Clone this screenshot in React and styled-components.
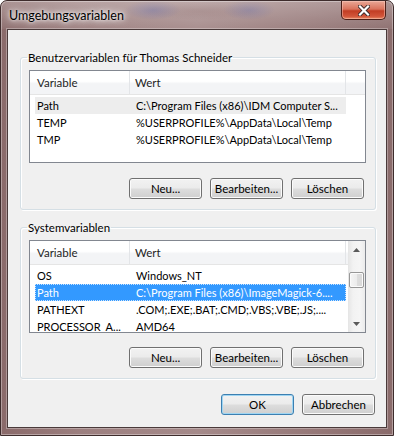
import React from 'react';
import styled, { createGlobalStyle } from 'styled-components';

const GlobalStyle = createGlobalStyle`
  html, body {
    margin: 0;
    padding: 0;
    background: #fff;
  }
  body {
    font-family: "Segoe UI", Lato, "Noto Sans", sans-serif;
    font-size: 11px;
    color: #000;
  }
`;

const Frame = styled.div`
  width: 394px;
  height: 436px;
  box-sizing: border-box;
  display: flex;
  flex-direction: column;
  padding: 0 6px 7px 6px;
  border: 1px solid #3e2c2c;
  border-radius: 7px 7px 0 0;
  background:
    radial-gradient(ellipse 28px 10px at 152px 9px, rgba(80, 84, 150, 0.45), transparent),
    radial-gradient(ellipse 26px 10px at 248px 9px, rgba(80, 84, 150, 0.4), transparent),
    radial-gradient(ellipse 60px 9px at 200px 10px, rgba(110, 70, 70, 0.25), transparent),
    linear-gradient(to right, #8a6a6a 0%, #9c7f7f 20%, #a58a8a 50%, #967878 80%, #8a6b6b 100%);
  box-shadow: inset 0 0 0 1px rgba(255, 255, 255, 0.35);
`;

const TitleBar = styled.div`
  height: 28px;
  display: flex;
  align-items: flex-start;
  justify-content: space-between;
  background: linear-gradient(to bottom, rgba(255, 255, 255, 0.28), rgba(255, 255, 255, 0.05));
  margin: 0 -6px;
  padding: 0 6px;
  border-radius: 6px 6px 0 0;
`;

const Title = styled.div`
  padding: 7px 0 0 2px;
  font-size: 12.5px;
  line-height: 16px;
  color: #000;
  text-shadow: 0 0 6px #fff, 0 0 10px rgba(255, 255, 255, 0.9), 0 0 3px rgba(255, 255, 255, 0.8);
`;

const CloseButton = styled.div`
  width: 45px;
  height: 19px;
  margin-right: 1px;
  box-sizing: border-box;
  border: 1px solid #4c1f18;
  border-top: none;
  border-radius: 0 0 5px 5px;
  background: linear-gradient(to bottom, #e9a796 0%, #d9735c 45%, #c23d24 55%, #d2553a 85%, #e88a64 100%);
  box-shadow: inset 0 0 0 1px rgba(255, 210, 200, 0.45);
  display: flex;
  align-items: center;
  justify-content: center;
`;

const Client = styled.div`
  flex: 1;
  background: #f0f0f0;
  border: 1px solid #4a3a3a;
  box-shadow: 0 0 0 1px rgba(255, 255, 255, 0.3);
  padding: 20px 10px 0 12px;
  display: flex;
  flex-direction: column;
`;

const Group = styled.fieldset`
  margin: ${(p) => (p.$second ? '10px 0 0 0' : '0')};
  border: 1px solid #d5dfe5;
  border-radius: 3px;
  padding: 5px 9px 10px 8px;
  box-shadow: inset 1px 1px 0 #fff, 1px 1px 0 #fff;
  min-width: 0;
`;

const Legend = styled.legend`
  padding: 0 1px;
  margin-left: -2px;
  line-height: 15px;
  font-size: 11.5px;
`;

const ListBox = styled.div`
  height: 93px;
  box-sizing: border-box;
  border: 1px solid #828790;
  background: #fff;
  display: flex;
  overflow: hidden;
`;

const ListMain = styled.div`
  flex: 1;
  min-width: 0;
  display: flex;
  flex-direction: column;
`;

const Header = styled.div`
  height: 24px;
  box-sizing: border-box;
  display: flex;
  border-bottom: 1px solid #e5e5e5;
  background: linear-gradient(to bottom, #fff 0%, #fff 45%, #f3f4f6 55%, #f3f4f6 100%);
`;

const HeaderCell = styled.div`
  width: ${(p) => p.$w}px;
  flex: ${(p) => (p.$w ? 'none' : '1')};
  box-sizing: border-box;
  padding-left: ${(p) => p.$pad}px;
  border-right: ${(p) => (p.$w ? '1px solid #e3e5e8' : 'none')};
  line-height: 23px;
  font-size: 11.5px;
  color: #1e1e1e;
`;

const Rows = styled.div`
  padding-top: 2px;
`;

const Row = styled.div`
  display: grid;
  grid-template-columns: 95px 216px;
  width: 311px;
  height: 17px;
  box-sizing: border-box;
  margin-left: 5px;
  line-height: 15px;
  white-space: nowrap;
  background: ${(p) => (p.$state === 'selected' ? '#3399ff' : p.$state === 'inactive' ? '#ededed' : 'transparent')};
  color: ${(p) => (p.$state === 'selected' ? '#fff' : '#000')};
  border: 1px ${(p) => (p.$state === 'selected' ? 'dotted #c9e3ff' : 'solid transparent')};
`;

const Cell = styled.div`
  padding-left: ${(p) => p.$pad}px;
  overflow: hidden;
`;

const ScrollBar = styled.div`
  width: 17px;
  display: flex;
  flex-direction: column;
  background: linear-gradient(to right, #e5e5e5 0%, #f2f2f2 30%, #f5f5f5 70%, #ebebeb 100%);
`;

const ScrollArrow = styled.div`
  height: 17px;
  display: flex;
  align-items: ${(p) => (p.$down ? 'flex-start' : 'flex-end')};
  justify-content: center;
  padding: ${(p) => (p.$down ? '7px 0 0 0' : '0 0 6px 0')};
  box-sizing: border-box;
`;

const Track = styled.div`
  flex: 1;
  padding-top: 14px;
`;

const Thumb = styled.div`
  width: 15px;
  height: 16px;
  margin-left: 1px;
  box-sizing: border-box;
  border: 1px solid #979797;
  border-radius: 2px;
  background: linear-gradient(to right, #f5f5f5 0%, #ececec 50%, #dedede 51%, #d8d8d8 100%);
  box-shadow: inset 0 0 0 1px #fbfbfb;
`;

const ButtonRow = styled.div`
  display: flex;
  justify-content: flex-end;
  gap: 8px;
  margin-top: ${(p) => p.$top}px;
  padding-right: ${(p) => p.$right}px;
`;

const Button = styled.button`
  width: 73px;
  height: 21px;
  padding: 0;
  box-sizing: border-box;
  font-family: inherit;
  font-size: 11.5px;
  line-height: 18px;
  color: #000;
  border: 1px solid ${(p) => (p.$default ? '#3c7fb1' : '#707070')};
  border-radius: 3px;
  background: linear-gradient(to bottom, #f2f2f2 0%, #ebebeb 48%, #dddddd 52%, #cfcfcf 100%);
  box-shadow: inset 0 0 0 1px ${(p) => (p.$default ? '#9fd5f2' : '#fbfbfb')};
`;

const userVars = [
  { name: 'Path', value: 'C:\\Program Files (x86)\\IDM Computer S...', state: 'inactive' },
  { name: 'TEMP', value: '%USERPROFILE%\\AppData\\Local\\Temp' },
  { name: 'TMP', value: '%USERPROFILE%\\AppData\\Local\\Temp' },
];

const systemVars = [
  { name: 'OS', value: 'Windows_NT' },
  { name: 'Path', value: 'C:\\Program Files (x86)\\ImageMagick-6....', state: 'selected' },
  { name: 'PATHEXT', value: '.COM;.EXE;.BAT;.CMD;.VBS;.VBE;.JS;....' },
  { name: 'PROCESSOR_A...', value: 'AMD64' },
];

const Arrow = ({ down }) => (
  <svg width="7" height="4" viewBox="0 0 7 4">
    <path d={down ? 'M0 0 L7 0 L3.5 4 Z' : 'M0 4 L7 4 L3.5 0 Z'} fill="#5a5a5a" />
  </svg>
);

const VarList = ({ rows, scroll }) => (
  <ListBox>
    <ListMain>
      <Header>
        <HeaderCell $w={100} $pad={7}>Variable</HeaderCell>
        <HeaderCell $w={216} $pad={5}>Wert</HeaderCell>
        {!scroll && <HeaderCell />}
      </Header>
      <Rows>
        {rows.map((r) => (
          <Row key={r.name} $state={r.state}>
            <Cell $pad={1}>{r.name}</Cell>
            <Cell $pad={5}>{r.value}</Cell>
          </Row>
        ))}
      </Rows>
    </ListMain>
    {scroll && (
      <ScrollBar>
        <ScrollArrow>
          <Arrow />
        </ScrollArrow>
        <Track>
          <Thumb />
        </Track>
        <ScrollArrow $down>
          <Arrow down />
        </ScrollArrow>
      </ScrollBar>
    )}
  </ListBox>
);

const App = () => (
  <>
    <GlobalStyle />
    <Frame>
      <TitleBar>
        <Title>Umgebungsvariablen</Title>
        <CloseButton>
          <svg width="12" height="11" viewBox="0 0 12 11">
            <path d="M2 1.5 L10 9.5 M10 1.5 L2 9.5" stroke="#3a2a2a" strokeWidth="4" strokeLinecap="square" />
            <path d="M2 1.5 L10 9.5 M10 1.5 L2 9.5" stroke="#fff" strokeWidth="2.2" strokeLinecap="square" />
          </svg>
        </CloseButton>
      </TitleBar>
      <Client>
        <Group>
          <Legend>Benutzervariablen für Thomas Schneider</Legend>
          <VarList rows={userVars} />
          <ButtonRow $top={15} $right={2}>
            <Button>Neu...</Button>
            <Button>Bearbeiten...</Button>
            <Button>Löschen</Button>
          </ButtonRow>
        </Group>
        <Group $second>
          <Legend>Systemvariablen</Legend>
          <VarList rows={systemVars} scroll />
          <ButtonRow $top={14} $right={2}>
            <Button>Neu...</Button>
            <Button>Bearbeiten...</Button>
            <Button>Löschen</Button>
          </ButtonRow>
        </Group>
        <ButtonRow $top={15} $right={1}>
          <Button $default>OK</Button>
          <Button>Abbrechen</Button>
        </ButtonRow>
      </Client>
    </Frame>
  </>
);

export default App;
